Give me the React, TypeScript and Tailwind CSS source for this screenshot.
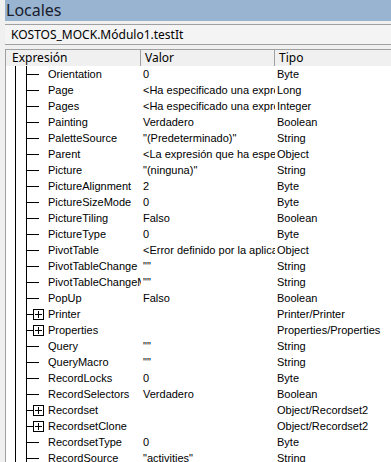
type Row = { name: string; value?: string; type: string; expandable?: boolean }

const rows: Row[] = [
	{ name: 'Orientation', value: '0', type: 'Byte' },
	{ name: 'Page', value: '<Ha especificado una expresión que no tiene valor.>', type: 'Long' },
	{ name: 'Pages', value: '<Ha especificado una expresión que no tiene valor.>', type: 'Integer' },
	{ name: 'Painting', value: 'Verdadero', type: 'Boolean' },
	{ name: 'PaletteSource', value: '"(Predeterminado)"', type: 'String' },
	{ name: 'Parent', value: '<La expresión que ha especificado no es válida.>', type: 'Object' },
	{ name: 'Picture', value: '"(ninguna)"', type: 'String' },
	{ name: 'PictureAlignment', value: '2', type: 'Byte' },
	{ name: 'PictureSizeMode', value: '0', type: 'Byte' },
	{ name: 'PictureTiling', value: 'Falso', type: 'Boolean' },
	{ name: 'PictureType', value: '0', type: 'Byte' },
	{ name: 'PivotTable', value: '<Error definido por la aplicación o el objeto>', type: 'Object' },
	{ name: 'PivotTableChange', value: '""', type: 'String' },
	{ name: 'PivotTableChangeMethod', value: '""', type: 'String' },
	{ name: 'PopUp', value: 'Falso', type: 'Boolean' },
	{ name: 'Printer', type: 'Printer/Printer', expandable: true },
	{ name: 'Properties', type: 'Properties/Properties', expandable: true },
	{ name: 'Query', value: '""', type: 'String' },
	{ name: 'QueryMacro', value: '""', type: 'String' },
	{ name: 'RecordLocks', value: '0', type: 'Byte' },
	{ name: 'RecordSelectors', value: 'Verdadero', type: 'Boolean' },
	{ name: 'Recordset', type: 'Object/Recordset2', expandable: true },
	{ name: 'RecordsetClone', type: 'Object/Recordset2', expandable: true },
	{ name: 'RecordsetType', value: '0', type: 'Byte' },
	{ name: 'RecordSource', value: '"activities"', type: 'String' },
]

function Connector({ expandable }: { expandable?: boolean }) {
	if (!expandable) {
		return (
			<div className="flex items-center w-[21px] shrink-0">
				<div className="w-[12px] h-px bg-black" />
			</div>
		)
	}
	return (
		<div className="flex items-center w-[21px] shrink-0">
			<div className="w-[6px] h-px bg-black" />
			<div className="relative w-[11px] h-[11px] border border-black bg-white flex items-center justify-center">
				<div className="w-[7px] h-px bg-black" />
				<div className="absolute w-px h-[7px] bg-black" />
			</div>
		</div>
	)
}

function TreeRow({ row }: { row: Row }) {
	return (
		<div className="flex h-[16px] text-[11px] leading-[16px] text-black">
			<div className="flex items-stretch w-[135px] shrink-0 overflow-hidden">
				<div className="w-[9px] shrink-0" />
				<div className="w-px shrink-0 bg-black" />
				<div className="w-[10px] shrink-0" />
				<div className="w-px shrink-0 bg-black" />
				<Connector expandable={row.expandable} />
				<span className="whitespace-nowrap">{row.name}</span>
			</div>
			<div className="w-[134px] shrink-0 overflow-hidden whitespace-nowrap pl-[2px]">{row.value}</div>
			<div className="flex-1 overflow-hidden whitespace-nowrap pl-[2px]">{row.type}</div>
		</div>
	)
}

export default function App() {
	return (
		<div className="w-[391px] h-[462px] overflow-hidden bg-[#f0f0f0] pl-[5px]" style={{ fontFamily: '"Liberation Sans", Arial, sans-serif' }}>
			<div
				className="h-[21px] bg-[#99b4d1] text-[#1a1c2c] text-[16px] leading-[21px] pl-[1px]"
				style={{ fontFamily: '"Noto Sans", "Open Sans", sans-serif' }}
			>
				Locales
			</div>

			<div
				className="mt-[3px] h-[21px] border-y border-[#a0a0a0] bg-[#f4f4f4] text-[12px] leading-[19px] pl-[6px] text-black"
				style={{ fontFamily: '"Noto Sans", "Open Sans", sans-serif' }}
			>
				KOSTOS_MOCK.Módulo1.testIt
			</div>

			<div className="mt-[4px] border-l border-t border-[#a0a0a0] bg-white h-[420px]">
				<div
					className="flex h-[16px] bg-[#f0f0f0] text-[12px] leading-[16px] text-black"
					style={{ fontFamily: '"Noto Sans", "Open Sans", sans-serif' }}
				>
					<div className="w-[135px] shrink-0 border-r border-[#a0a0a0] pl-[6px]">Expresión</div>
					<div className="w-[134px] shrink-0 border-r border-[#a0a0a0] pl-[4px]">Valor</div>
					<div className="flex-1 pl-[4px]">Tipo</div>
				</div>
				{rows.map(r => (
					<TreeRow key={r.name} row={r} />
				))}
			</div>
		</div>
	)
}
